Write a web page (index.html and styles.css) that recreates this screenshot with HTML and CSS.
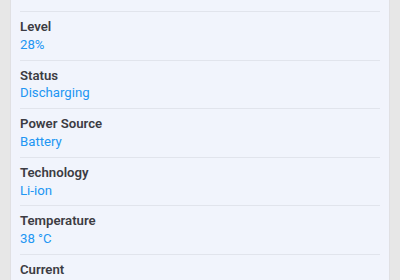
FILE: index.html
```html
<!DOCTYPE html>
<html lang="en">
<head>
    <meta charset="UTF-8">
    <meta name="viewport" content="width=device-width, initial-scale=1.0">
    <title>Battery Info</title>
    <link rel="stylesheet" href="styles.css">
</head>
<body>
    <div class="container">
        <div class="info-card">
            <div class="info-row">
                <div class="info-label">Health</div>
                <div class="info-value">Good</div>
            </div>
            <div class="info-row">
                <div class="info-label">Level</div>
                <div class="info-value">28%</div>
            </div>
            <div class="info-row">
                <div class="info-label">Status</div>
                <div class="info-value">Discharging</div>
            </div>
            <div class="info-row">
                <div class="info-label">Power Source</div>
                <div class="info-value">Battery</div>
            </div>
            <div class="info-row">
                <div class="info-label">Technology</div>
                <div class="info-value">Li-ion</div>
            </div>
            <div class="info-row">
                <div class="info-label">Temperature</div>
                <div class="info-value">38 °C</div>
            </div>
            <div class="info-row">
                <div class="info-label">Current</div>
                <div class="info-value">-412 mA</div>
            </div>
        </div>
    </div>
</body>
</html>
```

FILE: styles.css
```css
:root {
    --bg-color: #e7e7e7;
    --card-bg: #f1f4fc;
    --label-color: #3c3c43;
    --value-color: #2196f3;
    --divider-color: #e1e4ec;
}

* {
    margin: 0;
    padding: 0;
    box-sizing: border-box;
    font-family: Roboto, 'Noto Sans', sans-serif;
}

body {
    background-color: var(--bg-color);
    height: 280px;
    overflow: hidden;
}

.container {
    padding: 0 11px;
}

.info-card {
    background-color: var(--card-bg);
    margin-top: -36.6px;
    padding: 0 9px;
    box-shadow: 0 0 0 1px #e0e0e3;
}

.info-row {
    padding: 6px 0;
    border-top: 1px solid var(--divider-color);
}

.info-row:first-child {
    border-top: none;
}

.info-label {
    font-size: 13.2px;
    line-height: 17.8px;
    font-weight: 600;
    color: var(--label-color);
}

.info-value {
    font-size: 13.2px;
    line-height: 17.8px;
    color: var(--value-color);
}
```
